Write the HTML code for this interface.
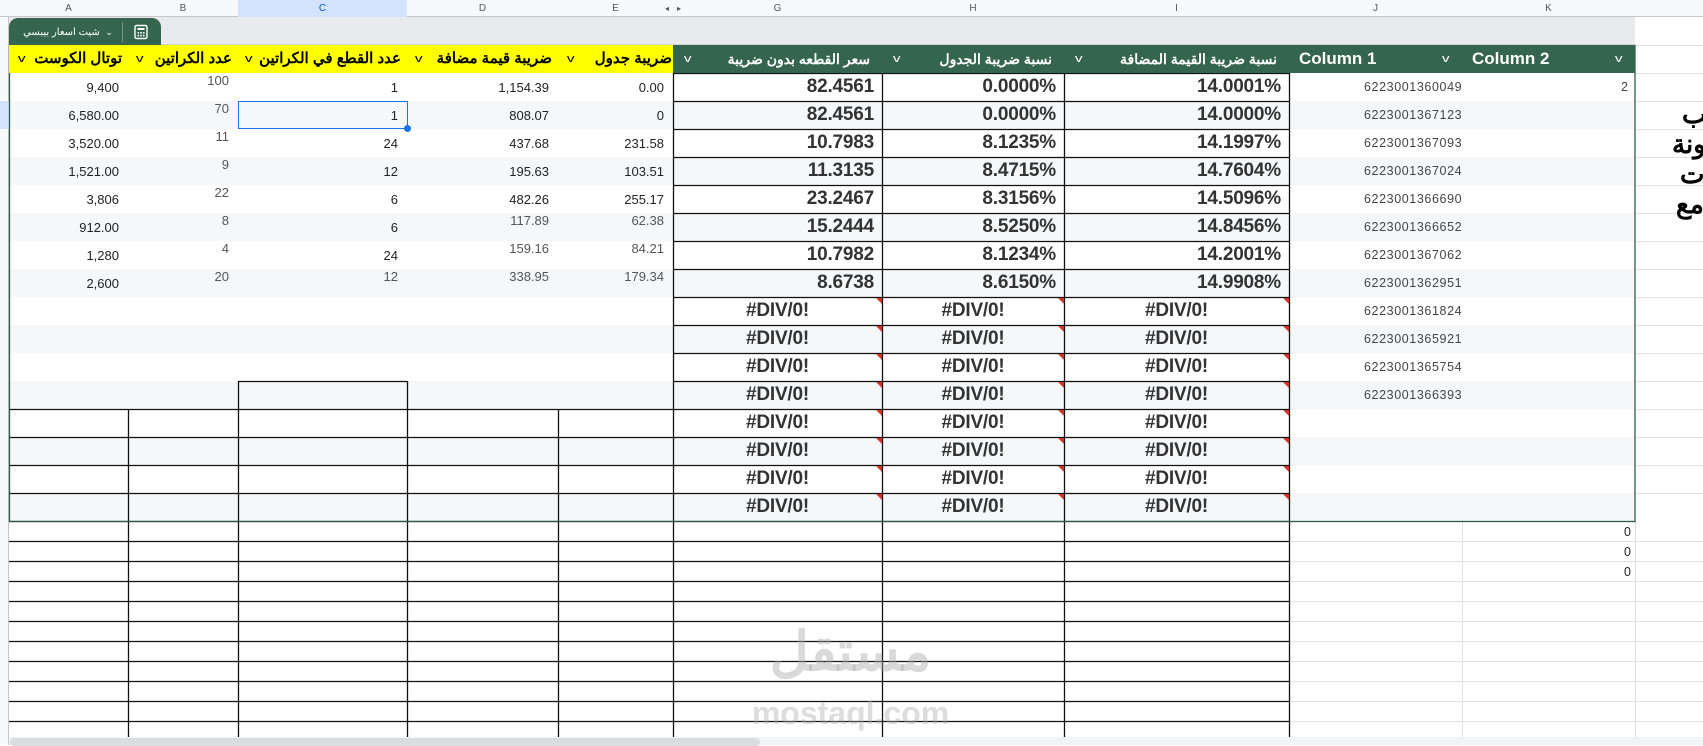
<!DOCTYPE html>
<html><head><meta charset="utf-8">
<style>
*{margin:0;padding:0;box-sizing:border-box}
body{width:1703px;height:745px;overflow:hidden;background:#fff;position:relative;font-family:"Liberation Sans","Noto Sans CJK SC",sans-serif;}
.a{position:absolute}
.t{position:absolute;height:28px;line-height:30px;font-size:13px;color:#222;text-align:right;padding-right:9px;white-space:nowrap}
.g{color:#555}
.b{position:absolute;height:28px;line-height:28px;font-size:19px;font-weight:bold;color:#333;text-align:right;padding-right:8px;white-space:nowrap;letter-spacing:-0.2px}
.dv{text-align:center;padding:0}
.j{position:absolute;height:28px;line-height:28px;font-size:12.5px;color:#444;white-space:nowrap;letter-spacing:0.6px}
.h{position:absolute;top:45px;height:28px;line-height:28px;font-weight:bold;white-space:nowrap;direction:rtl;text-align:right;padding-right:6px}
.hy{background:#ffff00;color:#000;font-size:15px}
.hg{background:#35654f;color:#fff;font-size:14px}
.chev{position:absolute;top:0;font-size:11px;font-weight:normal;transform:scaleX(1.4)}
.cl{position:absolute;top:0;height:17px;line-height:17px;font-size:10px;color:#555;text-align:center}
.tri{position:absolute;width:0;height:0;border-top:6px solid #d93025;border-left:6px solid transparent}
</style></head><body>
<div class="a" style="left:0;top:0;width:1703px;height:17px;background:#f8f9fa;border-bottom:1px solid #c7c7c7"></div>
<div class="a" style="left:238px;top:0;width:169px;height:17px;background:#d3e3fd"></div>
<div class="cl" style="left:9px;width:119px">A</div>
<div class="cl" style="left:128px;width:110px">B</div>
<div class="cl" style="left:238px;width:169px;color:#0b57d0">C</div>
<div class="cl" style="left:407px;width:151px">D</div>
<div class="cl" style="left:558px;width:115px">E</div>
<div class="cl" style="left:673px;width:209px">G</div>
<div class="cl" style="left:882px;width:182px">H</div>
<div class="cl" style="left:1064px;width:225px">I</div>
<div class="cl" style="left:1289px;width:173px">J</div>
<div class="cl" style="left:1462px;width:173px">K</div>
<div class="cl" style="left:663px;width:8px;font-size:8px">◂</div>
<div class="cl" style="left:675px;width:8px;font-size:8px">▸</div>
<div class="a" style="left:9px;top:17px;width:1626px;height:28px;background:#e9eaee"></div>
<div class="a" style="left:0;top:17px;width:9px;height:728px;background:#f8f9fa;border-right:1px solid #c7c7c7"></div>
<div class="a" style="left:0;top:101px;width:9px;height:28px;background:#d3e3fd"></div>
<div class="a" style="left:9px;top:18px;width:152px;height:28px;background:#35654f;border-radius:9px 9px 0 0"></div>
<div class="a" style="left:122px;top:22px;width:1px;height:20px;background:#6f9482"></div>
<div class="a" style="left:18px;top:22px;width:100px;height:20px;line-height:20px;color:#fff;font-size:10px;direction:rtl;text-align:center"><span style="font-size:9px">⌄</span>&nbsp; شيت اسعار بيبسي</div>
<svg class="a" style="left:133px;top:24px" width="16" height="16" viewBox="0 0 16 16"><rect x="2" y="1.5" width="12" height="13" rx="1.5" fill="none" stroke="#fff" stroke-width="1.4"/><rect x="4.5" y="4" width="7" height="2" fill="#fff"/><g fill="#fff"><rect x="4.5" y="8" width="1.6" height="1.6"/><rect x="7.2" y="8" width="1.6" height="1.6"/><rect x="9.9" y="8" width="1.6" height="1.6"/><rect x="4.5" y="10.8" width="1.6" height="1.6"/><rect x="7.2" y="10.8" width="1.6" height="1.6"/><rect x="9.9" y="10.8" width="1.6" height="1.6"/></g></svg>

<div class="a" style="left:9px;top:101px;width:1626px;height:28px;background:#f5f7f9"></div>
<div class="a" style="left:9px;top:157px;width:1626px;height:28px;background:#f5f7f9"></div>
<div class="a" style="left:9px;top:213px;width:1626px;height:28px;background:#f5f7f9"></div>
<div class="a" style="left:9px;top:269px;width:1626px;height:28px;background:#f5f7f9"></div>
<div class="a" style="left:9px;top:325px;width:1626px;height:28px;background:#f5f7f9"></div>
<div class="a" style="left:9px;top:381px;width:1626px;height:28px;background:#f5f7f9"></div>
<div class="a" style="left:9px;top:437px;width:1626px;height:28px;background:#f5f7f9"></div>
<div class="a" style="left:9px;top:493px;width:1626px;height:28px;background:#f5f7f9"></div>

<svg class="a" style="left:0;top:0" width="1703" height="745">
<g stroke="#e1e1e1" stroke-width="1">
<line x1="1635" y1="45.5" x2="1703" y2="45.5"/><line x1="1635" y1="73.5" x2="1703" y2="73.5"/><line x1="1635" y1="101.5" x2="1703" y2="101.5"/><line x1="1635" y1="129.5" x2="1703" y2="129.5"/><line x1="1635" y1="157.5" x2="1703" y2="157.5"/><line x1="1635" y1="185.5" x2="1703" y2="185.5"/><line x1="1635" y1="213.5" x2="1703" y2="213.5"/><line x1="1635" y1="241.5" x2="1703" y2="241.5"/><line x1="1635" y1="269.5" x2="1703" y2="269.5"/><line x1="1635" y1="297.5" x2="1703" y2="297.5"/><line x1="1635" y1="325.5" x2="1703" y2="325.5"/><line x1="1635" y1="353.5" x2="1703" y2="353.5"/><line x1="1635" y1="381.5" x2="1703" y2="381.5"/><line x1="1635" y1="409.5" x2="1703" y2="409.5"/><line x1="1635" y1="437.5" x2="1703" y2="437.5"/><line x1="1635" y1="465.5" x2="1703" y2="465.5"/><line x1="1635" y1="493.5" x2="1703" y2="493.5"/>
<line x1="1289" y1="541.5" x2="1703" y2="541.5"/><line x1="1289" y1="561.5" x2="1703" y2="561.5"/><line x1="1289" y1="581.5" x2="1703" y2="581.5"/><line x1="1289" y1="601.5" x2="1703" y2="601.5"/><line x1="1289" y1="621.5" x2="1703" y2="621.5"/><line x1="1289" y1="641.5" x2="1703" y2="641.5"/><line x1="1289" y1="661.5" x2="1703" y2="661.5"/><line x1="1289" y1="681.5" x2="1703" y2="681.5"/><line x1="1289" y1="701.5" x2="1703" y2="701.5"/><line x1="1289" y1="721.5" x2="1703" y2="721.5"/>
<line x1="1462.5" y1="521" x2="1462.5" y2="737"/><line x1="1635.5" y1="521" x2="1635.5" y2="737"/>
</g>
<g stroke="#111" stroke-width="1.3">
<line x1="9" y1="541.5" x2="1289" y2="541.5"/><line x1="9" y1="561.5" x2="1289" y2="561.5"/><line x1="9" y1="581.5" x2="1289" y2="581.5"/><line x1="9" y1="601.5" x2="1289" y2="601.5"/><line x1="9" y1="621.5" x2="1289" y2="621.5"/><line x1="9" y1="641.5" x2="1289" y2="641.5"/><line x1="9" y1="661.5" x2="1289" y2="661.5"/><line x1="9" y1="681.5" x2="1289" y2="681.5"/><line x1="9" y1="701.5" x2="1289" y2="701.5"/><line x1="9" y1="721.5" x2="1289" y2="721.5"/>
<line x1="128.5" y1="409" x2="128.5" y2="737"/><line x1="238.5" y1="381" x2="238.5" y2="737"/><line x1="407.5" y1="381" x2="407.5" y2="737"/><line x1="558.5" y1="409" x2="558.5" y2="737"/><line x1="673.5" y1="73" x2="673.5" y2="737"/><line x1="882.5" y1="73" x2="882.5" y2="737"/><line x1="1064.5" y1="73" x2="1064.5" y2="737"/><line x1="1289.5" y1="73" x2="1289.5" y2="737"/>
<line x1="238" y1="381.5" x2="407" y2="381.5"/>
<line x1="9" y1="409.5" x2="673" y2="409.5"/><line x1="9" y1="437.5" x2="673" y2="437.5"/><line x1="9" y1="465.5" x2="673" y2="465.5"/><line x1="9" y1="493.5" x2="673" y2="493.5"/><line x1="9" y1="521.5" x2="673" y2="521.5"/>
<line x1="673" y1="73.5" x2="1289" y2="73.5"/><line x1="673" y1="101.5" x2="1289" y2="101.5"/><line x1="673" y1="129.5" x2="1289" y2="129.5"/><line x1="673" y1="157.5" x2="1289" y2="157.5"/><line x1="673" y1="185.5" x2="1289" y2="185.5"/><line x1="673" y1="213.5" x2="1289" y2="213.5"/><line x1="673" y1="241.5" x2="1289" y2="241.5"/><line x1="673" y1="269.5" x2="1289" y2="269.5"/><line x1="673" y1="297.5" x2="1289" y2="297.5"/><line x1="673" y1="325.5" x2="1289" y2="325.5"/><line x1="673" y1="353.5" x2="1289" y2="353.5"/><line x1="673" y1="381.5" x2="1289" y2="381.5"/><line x1="673" y1="409.5" x2="1289" y2="409.5"/><line x1="673" y1="437.5" x2="1289" y2="437.5"/><line x1="673" y1="465.5" x2="1289" y2="465.5"/><line x1="673" y1="493.5" x2="1289" y2="493.5"/><line x1="673" y1="521.5" x2="1289" y2="521.5"/>
</g>
<rect x="9.5" y="45.5" width="1625.5" height="476" fill="none" stroke="#2f5c48" stroke-width="1.3"/>
</svg>

<div class="h hy" style="left:9px;width:119px">توتال الكوست<span class="chev" style="left:10px">v</span></div>
<div class="h hy" style="left:128px;width:110px">عدد الكراتين<span class="chev" style="left:9px">v</span></div>
<div class="h hy" style="left:238px;width:169px">عدد القطع في الكراتين<span class="chev" style="left:8px">v</span></div>
<div class="h hy" style="left:407px;width:151px">ضريبة قيمة مضافة<span class="chev" style="left:9px">v</span></div>
<div class="h hy" style="left:558px;width:115px;padding-right:1px">ضريبة جدول<span class="chev" style="left:10px">v</span></div>
<div class="h hg" style="left:673px;width:209px;padding-right:12px">سعر القطعه بدون ضريبة<span class="chev" style="left:12px">v</span></div>
<div class="h hg" style="left:882px;width:182px;padding-right:12px">نسبة ضريبة الجدول<span class="chev" style="left:12px">v</span></div>
<div class="h hg" style="left:1064px;width:225px;padding-right:12px">نسبة ضريبة القيمة المضافة<span class="chev" style="left:12px">v</span></div>
<div class="h hg" style="left:1289px;width:173px;direction:ltr;text-align:left;padding-left:10px;font-size:17px">Column 1<span class="chev" style="left:154px;font-size:11px">v</span></div>
<div class="h hg" style="left:1462px;width:173px;direction:ltr;text-align:left;padding-left:10px;font-size:17px">Column 2<span class="chev" style="left:154px;font-size:11px">v</span></div>

<div class="t" style="left:9px;top:73px;width:119px">9,400</div>
<div class="t" style="left:9px;top:101px;width:119px">6,580.00</div>
<div class="t" style="left:9px;top:129px;width:119px">3,520.00</div>
<div class="t" style="left:9px;top:157px;width:119px">1,521.00</div>
<div class="t" style="left:9px;top:185px;width:119px">3,806</div>
<div class="t" style="left:9px;top:213px;width:119px">912.00</div>
<div class="t" style="left:9px;top:241px;width:119px">1,280</div>
<div class="t" style="left:9px;top:269px;width:119px">2,600</div>
<div class="t g" style="left:128px;top:66px;width:110px">100</div>
<div class="t g" style="left:128px;top:94px;width:110px">70</div>
<div class="t g" style="left:128px;top:122px;width:110px">11</div>
<div class="t g" style="left:128px;top:150px;width:110px">9</div>
<div class="t g" style="left:128px;top:178px;width:110px">22</div>
<div class="t g" style="left:128px;top:206px;width:110px">8</div>
<div class="t g" style="left:128px;top:234px;width:110px">4</div>
<div class="t g" style="left:128px;top:262px;width:110px">20</div>
<div class="t" style="left:238px;top:73px;width:169px">1</div>
<div class="t" style="left:238px;top:101px;width:169px">1</div>
<div class="t" style="left:238px;top:129px;width:169px">24</div>
<div class="t" style="left:238px;top:157px;width:169px">12</div>
<div class="t" style="left:238px;top:185px;width:169px">6</div>
<div class="t" style="left:238px;top:213px;width:169px">6</div>
<div class="t" style="left:238px;top:241px;width:169px">24</div>
<div class="t g" style="left:238px;top:262px;width:169px">12</div>
<div class="t" style="left:407px;top:73px;width:151px">1,154.39</div>
<div class="t" style="left:407px;top:101px;width:151px">808.07</div>
<div class="t" style="left:407px;top:129px;width:151px">437.68</div>
<div class="t" style="left:407px;top:157px;width:151px">195.63</div>
<div class="t" style="left:407px;top:185px;width:151px">482.26</div>
<div class="t g" style="left:407px;top:206px;width:151px">117.89</div>
<div class="t g" style="left:407px;top:234px;width:151px">159.16</div>
<div class="t g" style="left:407px;top:262px;width:151px">338.95</div>
<div class="t" style="left:558px;top:73px;width:115px">0.00</div>
<div class="t" style="left:558px;top:101px;width:115px">0</div>
<div class="t" style="left:558px;top:129px;width:115px">231.58</div>
<div class="t" style="left:558px;top:157px;width:115px">103.51</div>
<div class="t" style="left:558px;top:185px;width:115px">255.17</div>
<div class="t g" style="left:558px;top:206px;width:115px">62.38</div>
<div class="t g" style="left:558px;top:234px;width:115px">84.21</div>
<div class="t g" style="left:558px;top:262px;width:115px">179.34</div>
<div class="a" style="left:238px;top:101px;width:170px;height:28px;border:1.5px solid #1a73e8"></div>
<div class="a" style="left:404px;top:125px;width:7px;height:7px;border-radius:50%;background:#1a73e8"></div>

<div class="b" style="left:673px;top:73px;width:209px">82.4561</div><div class="b" style="left:882px;top:73px;width:182px">0.0000%</div><div class="b" style="left:1064px;top:73px;width:225px">14.0001%</div>
<div class="b" style="left:673px;top:101px;width:209px">82.4561</div><div class="b" style="left:882px;top:101px;width:182px">0.0000%</div><div class="b" style="left:1064px;top:101px;width:225px">14.0000%</div>
<div class="b" style="left:673px;top:129px;width:209px">10.7983</div><div class="b" style="left:882px;top:129px;width:182px">8.1235%</div><div class="b" style="left:1064px;top:129px;width:225px">14.1997%</div>
<div class="b" style="left:673px;top:157px;width:209px">11.3135</div><div class="b" style="left:882px;top:157px;width:182px">8.4715%</div><div class="b" style="left:1064px;top:157px;width:225px">14.7604%</div>
<div class="b" style="left:673px;top:185px;width:209px">23.2467</div><div class="b" style="left:882px;top:185px;width:182px">8.3156%</div><div class="b" style="left:1064px;top:185px;width:225px">14.5096%</div>
<div class="b" style="left:673px;top:213px;width:209px">15.2444</div><div class="b" style="left:882px;top:213px;width:182px">8.5250%</div><div class="b" style="left:1064px;top:213px;width:225px">14.8456%</div>
<div class="b" style="left:673px;top:241px;width:209px">10.7982</div><div class="b" style="left:882px;top:241px;width:182px">8.1234%</div><div class="b" style="left:1064px;top:241px;width:225px">14.2001%</div>
<div class="b" style="left:673px;top:269px;width:209px">8.6738</div><div class="b" style="left:882px;top:269px;width:182px">8.6150%</div><div class="b" style="left:1064px;top:269px;width:225px">14.9908%</div>

<div class="b dv" style="left:673px;top:297px;width:209px">#DIV/0!</div><div class="b dv" style="left:882px;top:297px;width:182px">#DIV/0!</div><div class="b dv" style="left:1064px;top:297px;width:225px">#DIV/0!</div>
<div class="b dv" style="left:673px;top:325px;width:209px">#DIV/0!</div><div class="b dv" style="left:882px;top:325px;width:182px">#DIV/0!</div><div class="b dv" style="left:1064px;top:325px;width:225px">#DIV/0!</div>
<div class="b dv" style="left:673px;top:353px;width:209px">#DIV/0!</div><div class="b dv" style="left:882px;top:353px;width:182px">#DIV/0!</div><div class="b dv" style="left:1064px;top:353px;width:225px">#DIV/0!</div>
<div class="b dv" style="left:673px;top:381px;width:209px">#DIV/0!</div><div class="b dv" style="left:882px;top:381px;width:182px">#DIV/0!</div><div class="b dv" style="left:1064px;top:381px;width:225px">#DIV/0!</div>
<div class="b dv" style="left:673px;top:409px;width:209px">#DIV/0!</div><div class="b dv" style="left:882px;top:409px;width:182px">#DIV/0!</div><div class="b dv" style="left:1064px;top:409px;width:225px">#DIV/0!</div>
<div class="b dv" style="left:673px;top:437px;width:209px">#DIV/0!</div><div class="b dv" style="left:882px;top:437px;width:182px">#DIV/0!</div><div class="b dv" style="left:1064px;top:437px;width:225px">#DIV/0!</div>
<div class="b dv" style="left:673px;top:465px;width:209px">#DIV/0!</div><div class="b dv" style="left:882px;top:465px;width:182px">#DIV/0!</div><div class="b dv" style="left:1064px;top:465px;width:225px">#DIV/0!</div>
<div class="b dv" style="left:673px;top:493px;width:209px">#DIV/0!</div><div class="b dv" style="left:882px;top:493px;width:182px">#DIV/0!</div><div class="b dv" style="left:1064px;top:493px;width:225px">#DIV/0!</div>

<div class="tri" style="left:876px;top:298px"></div><div class="tri" style="left:1058px;top:298px"></div><div class="tri" style="left:1283px;top:298px"></div>
<div class="tri" style="left:876px;top:326px"></div><div class="tri" style="left:1058px;top:326px"></div><div class="tri" style="left:1283px;top:326px"></div>
<div class="tri" style="left:876px;top:354px"></div><div class="tri" style="left:1058px;top:354px"></div><div class="tri" style="left:1283px;top:354px"></div>
<div class="tri" style="left:876px;top:382px"></div><div class="tri" style="left:1058px;top:382px"></div><div class="tri" style="left:1283px;top:382px"></div>
<div class="tri" style="left:876px;top:410px"></div><div class="tri" style="left:1058px;top:410px"></div><div class="tri" style="left:1283px;top:410px"></div>
<div class="tri" style="left:876px;top:438px"></div><div class="tri" style="left:1058px;top:438px"></div><div class="tri" style="left:1283px;top:438px"></div>
<div class="tri" style="left:876px;top:466px"></div><div class="tri" style="left:1058px;top:466px"></div><div class="tri" style="left:1283px;top:466px"></div>
<div class="tri" style="left:876px;top:494px"></div><div class="tri" style="left:1058px;top:494px"></div><div class="tri" style="left:1283px;top:494px"></div>

<div class="j" style="left:1364px;top:73px">6223001360049</div>
<div class="j" style="left:1364px;top:101px">6223001367123</div>
<div class="j" style="left:1364px;top:129px">6223001367093</div>
<div class="j" style="left:1364px;top:157px">6223001367024</div>
<div class="j" style="left:1364px;top:185px">6223001366690</div>
<div class="j" style="left:1364px;top:213px">6223001366652</div>
<div class="j" style="left:1364px;top:241px">6223001367062</div>
<div class="j" style="left:1364px;top:269px">6223001362951</div>
<div class="j" style="left:1364px;top:297px">6223001361824</div>
<div class="j" style="left:1364px;top:325px">6223001365921</div>
<div class="j" style="left:1364px;top:353px">6223001365754</div>
<div class="j" style="left:1364px;top:381px">6223001366393</div>
<div class="j" style="left:1621px;top:73px">2</div>
<div class="j" style="left:1624px;top:521px;height:20px;line-height:22px;color:#222">0</div>
<div class="j" style="left:1624px;top:541px;height:20px;line-height:22px;color:#222">0</div>
<div class="j" style="left:1624px;top:561px;height:20px;line-height:22px;color:#222">0</div>

<div class="a" style="left:1640px;top:100px;width:63px;height:140px;overflow:hidden">
<div style="position:absolute;left:32px;top:0;font:bold 26px 'Liberation Serif','Noto Serif CJK SC',serif;line-height:30px;white-space:nowrap;direction:rtl;text-align:left;color:#000">
<div style="margin-left:10px">كب</div><div>مكونة</div><div style="margin-left:8px">ات</div><div style="margin-left:4px">مع</div></div>
</div>

<div class="a" style="left:748px;top:622px;width:205px;text-align:center;font:bold 54px 'Liberation Sans','Noto Sans CJK SC',sans-serif;color:rgba(170,170,170,0.45);line-height:60px;direction:rtl">مستقل</div>
<div class="a" style="left:748px;top:696px;width:205px;text-align:center;font:bold 32px 'Liberation Sans',sans-serif;color:rgba(170,170,170,0.4);line-height:34px">mostaql.com</div>

<div class="a" style="left:9px;top:737px;width:1694px;height:8px;background:#f1f3f4"></div>
<div class="a" style="left:10px;top:738px;width:750px;height:8px;background:#dadce0;border-radius:4px"></div>
</body></html>
